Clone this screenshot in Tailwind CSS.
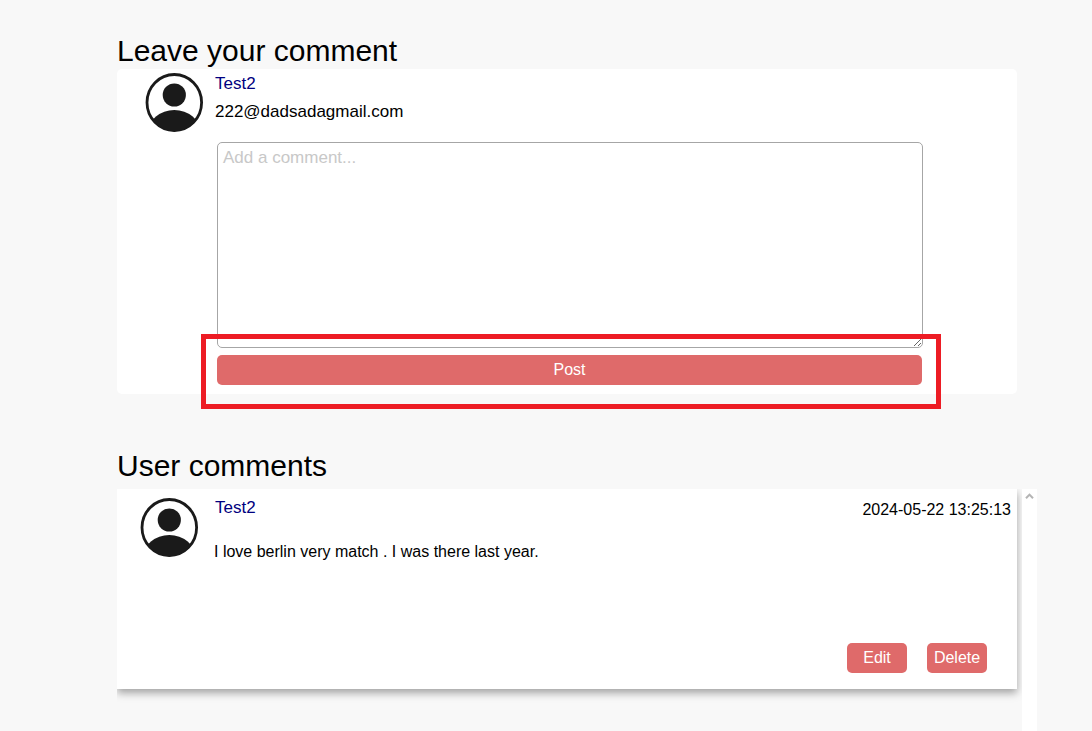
<!DOCTYPE html>
<html lang="en">
<head>
<meta charset="utf-8">
<title>Comments</title>
<script src="https://cdn.jsdelivr.net/npm/@tailwindcss/browser@4"></script>
</head>
<body class="h-[731px] overflow-hidden bg-[#f8f8f8] font-['Liberation_Sans',Arial,sans-serif] text-black">
<svg class="absolute h-0 w-0">
  <clipPath id="disc"><ellipse cx="29.3" cy="30.5" rx="28" ry="28.8"/></clipPath>
  <symbol id="avatar" viewBox="0 0 59 60">
    <ellipse cx="29.3" cy="30.5" rx="27.3" ry="28" fill="#fff" stroke="#1a1a1a" stroke-width="2.8"/>
    <circle cx="29.3" cy="23" r="11.6" fill="#1a1a1a"/>
    <ellipse cx="29.3" cy="60" rx="26" ry="22" fill="#1a1a1a" clip-path="url(#disc)"/>
  </symbol>
</svg>
<main class="ml-[117px] flex w-[920px] flex-col pt-[33px]">
  <h1 class="h-9 text-[30px] leading-9">Leave your comment</h1>
  <section class="relative flex h-[325px] w-[900px] rounded-[5px] bg-white">
    <svg class="mt-[3px] ml-[28px] h-[60px] w-[59px] shrink-0"><use href="#avatar"/></svg>
    <div class="ml-[11px] flex w-[708px] flex-col">
      <div class="mt-[5px] h-5 text-[17px] leading-5 text-[#000080]">Test2</div>
      <div class="mt-2 h-5 text-[17px] leading-5">222@dadsadagmail.com</div>
      <textarea class="mt-5 ml-[2px] block h-[206px] w-[706px] shrink-0 resize rounded-[5px] border border-[#a6a6a6] bg-white px-[5px] py-[5px] text-[17px] leading-5 placeholder:text-[#c8c8c8]" placeholder="Add a comment..."></textarea>
      <button class="mt-[7px] ml-[2px] h-[30px] w-[705px] shrink-0 rounded-[5px] bg-[#df6a6a] text-base leading-5 text-white">Post</button>
    </div>
    <div class="pointer-events-none absolute top-[265px] left-[84px] h-[75px] w-[740px] border-[5px] border-[#ed1c24]"></div>
  </section>
  <h2 class="mt-[54px] mb-[5px] h-9 text-[30px] leading-9">User comments</h2>
  <section class="flex h-[242px] w-[920px]">
    <div class="w-[905px] overflow-hidden">
      <article class="flex h-[200px] w-[900px] bg-white shadow-[0_4px_8px_rgba(0,0,0,0.35)]">
        <svg class="mt-[8px] ml-[23px] h-[60px] w-[59px] shrink-0"><use href="#avatar"/></svg>
        <div class="ml-[15px] w-[400px]">
          <div class="mt-[9px] ml-px h-5 text-[17px] leading-5 text-[#000080]">Test2</div>
          <p class="mt-6 h-5 text-base leading-5">I love berlin very match . I was there last year.</p>
        </div>
        <div class="flex flex-1 flex-col items-end justify-between pt-[11px] pb-4">
          <time class="mr-[6px] text-base leading-5">2024-05-22 13:25:13</time>
          <div class="mr-[30px] flex gap-5">
            <button class="h-[30px] w-[60px] rounded-[5px] bg-[#df6a6a] text-base leading-5 text-white">Edit</button>
            <button class="h-[30px] w-[60px] rounded-[5px] bg-[#df6a6a] text-base leading-5 text-white">Delete</button>
          </div>
        </div>
      </article>
    </div>
    <div class="flex w-[15px] bg-white">
      <svg class="mt-[3px] ml-[3px] h-[8px] w-[9px]" viewBox="0 0 9 8" fill="none" stroke="#b4b4b4" stroke-width="2"><path d="M1 6.3 4.5 2.6 8 6.3"/></svg>
    </div>
  </section>
</main>
</body>
</html>
